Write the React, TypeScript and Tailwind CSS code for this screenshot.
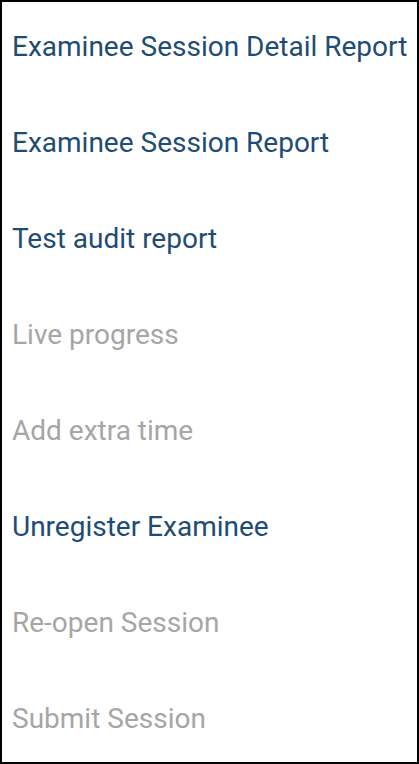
const items: { label: string; enabled: boolean }[] = [
  { label: "Examinee Session Detail Report", enabled: true },
  { label: "Examinee Session Report", enabled: true },
  { label: "Test audit report", enabled: true },
  { label: "Live progress", enabled: false },
  { label: "Add extra time", enabled: false },
  { label: "Unregister Examinee", enabled: true },
  { label: "Re-open Session", enabled: false },
  { label: "Submit Session", enabled: false },
];

export default function App() {
  return (
    <div className="h-[764px] w-[419px] overflow-hidden border-2 border-black bg-white font-['Roboto',sans-serif]">
      <ul className="-mt-[3px] flex flex-col">
        {items.map((item) => (
          <li
            key={item.label}
            className={
              item.enabled
                ? "flex h-24 items-center whitespace-nowrap pl-[10px] text-[28px] font-normal text-[#1e4c74]"
                : "flex h-24 items-center whitespace-nowrap pl-[10px] text-[28px] font-normal text-[#a6a6a6]"
            }
          >
            {item.label}
          </li>
        ))}
      </ul>
    </div>
  );
}
